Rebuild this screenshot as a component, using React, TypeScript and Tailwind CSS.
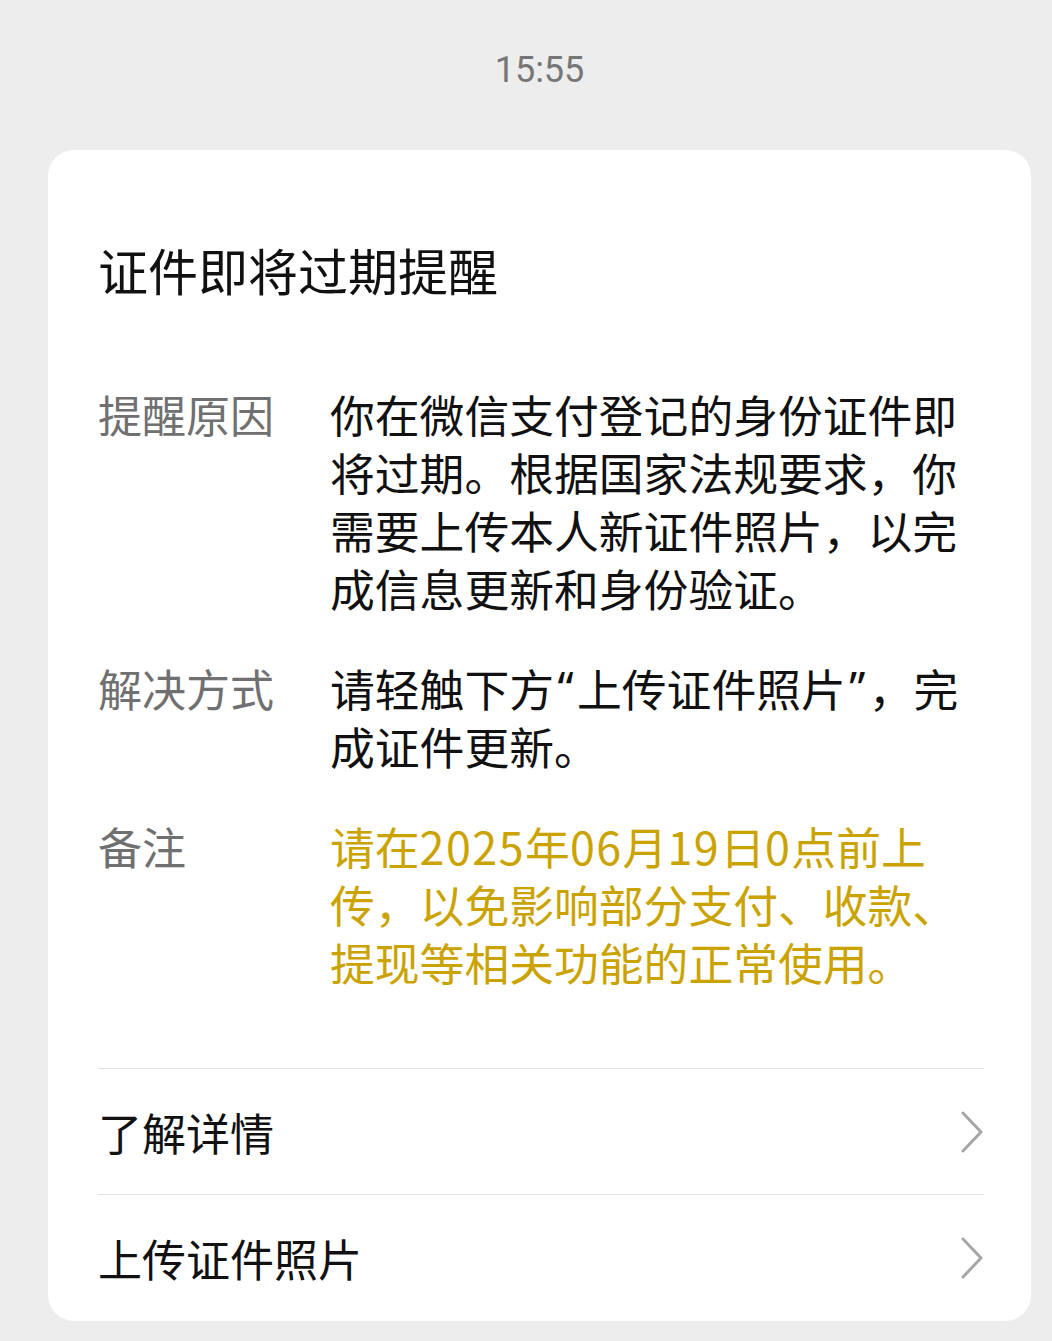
import React from 'react';

const font = { fontFamily: '"Noto Sans CJK SC", "Noto Sans", sans-serif' };

// digits in the reference are a touch wider than Noto's
const D = ({ children }: { children: React.ReactNode }) => (
  <span className="tracking-[1.5px]">{children}</span>
);

// half-width curly quotes, as the reference renders them
const Q = ({ children }: { children: React.ReactNode }) => (
  <span
    className="inline-block w-[23px] text-center leading-[58px] align-top"
    style={{ fontFamily: '"Noto Sans", sans-serif' }}
  >
    {children}
  </span>
);

const sections: { label: string; lines: React.ReactNode[]; tone: string }[] = [
  {
    label: '提醒原因',
    lines: ['你在微信支付登记的身份证件即', '将过期。根据国家法规要求，你', '需要上传本人新证件照片，以完', '成信息更新和身份验证。'],
    tone: 'text-[#111111]',
  },
  {
    label: '解决方式',
    lines: [<>请轻触下方<Q>“</Q>上传证件照片<Q>”</Q>，完</>, '成证件更新。'],
    tone: 'text-[#111111]',
  },
  {
    label: '备注',
    lines: [
      <>请在<D>2025</D>年<D>06</D>月<D>19</D>日<D>0</D>点前上</>,
      '传，以免影响部分支付、收款、',
      '提现等相关功能的正常使用。',
    ],
    tone: 'text-[#cba300]',
  },
];

const Chevron = () => (
  <svg width="24" height="42" viewBox="0 0 24 42" fill="none" className="shrink-0">
    <path d="M3 2 L21 21 L3 40" stroke="#a6a6a6" strokeWidth="3" strokeLinecap="round" strokeLinejoin="round" />
  </svg>
);

export default function App() {
  return (
    <div className="min-h-[1341px] w-[1052px] bg-[#ededed]" style={font}>
      <div className="w-[983px] ml-[48px] flex flex-col">
        {/* timestamp */}
        <div
          className="pt-[49px] h-[150px] text-center text-[36px] leading-[43px] text-[#767676]"
          style={{ fontFamily: 'Roboto, "Noto Sans", sans-serif' }}
        >
          15:55
        </div>

        <div className="bg-white rounded-[26px] pl-[50px] pr-[47px] pt-[89px]">
          <h1 className="text-[50px] leading-[60px] font-normal text-[#111111]">证件即将过期提醒</h1>

          <div className="mt-[86px] flex flex-col gap-[42px]">
            {sections.map(s => (
              <div key={s.label} className="flex">
                <div className="w-[232px] shrink-0 text-[44px] leading-[58px] text-[#707070]">{s.label}</div>
                <p className={`flex-1 whitespace-nowrap text-[44.8px] leading-[58px] ${s.tone}`}>
                  {s.lines.map((l, i) => (
                    <React.Fragment key={i}>
                      {i > 0 && <br />}
                      {l}
                    </React.Fragment>
                  ))}
                </p>
              </div>
            ))}
          </div>

          <div className="mt-[77px] border-t border-[#e2e2e2]">
            <div className="h-[126px] flex items-center justify-between border-b border-[#e2e2e2]">
              <span className="text-[44px] text-[#111111]">了解详情</span>
              <Chevron />
            </div>
            <div className="h-[126px] flex items-center justify-between">
              <span className="text-[44px] text-[#111111]">上传证件照片</span>
              <Chevron />
            </div>
          </div>
        </div>
      </div>
    </div>
  );
}
